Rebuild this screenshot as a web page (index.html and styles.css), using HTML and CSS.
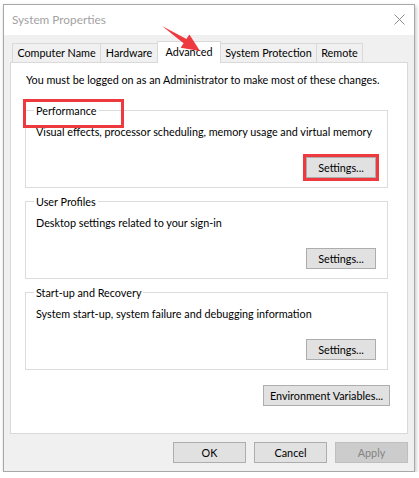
FILE: index.html
```html
<!DOCTYPE html>
<html lang="en">
<head>
  <meta charset="UTF-8">
  <title>System Properties</title>
  <link rel="stylesheet" href="styles.css">
</head>
<body>
  <div class="window">
    <!-- Title bar -->
    <div class="titlebar">
      <span class="title">System Properties</span>
      <svg class="close" width="11" height="11" viewBox="0 0 11 11">
        <path d="M0.5 0.5 L10.5 10.5 M10.5 0.5 L0.5 10.5" stroke="#8c8c8c" stroke-width="1" fill="none"/>
      </svg>
    </div>

    <div class="dialog">
      <!-- Tabs -->
      <div class="tabs">
        <div class="tab tab-cn">Computer Name</div>
        <div class="tab tab-hw">Hardware</div>
        <div class="tab tab-adv active">Advanced</div>
        <div class="tab tab-sp">System Protection</div>
        <div class="tab tab-rm">Remote</div>
      </div>

      <!-- Tab page -->
      <div class="panel">
        <p class="intro">You must be logged on as an Administrator to make most of these changes.</p>

        <fieldset class="group">
          <legend class="marked">Performance</legend>
          <p class="desc">Visual effects, processor scheduling, memory usage and virtual memory</p>
          <div class="group-actions">
            <button class="btn btn-settings highlighted">Settings...</button>
          </div>
        </fieldset>

        <fieldset class="group">
          <legend>User Profiles</legend>
          <p class="desc">Desktop settings related to your sign-in</p>
          <div class="group-actions">
            <button class="btn btn-settings">Settings...</button>
          </div>
        </fieldset>

        <fieldset class="group">
          <legend>Start-up and Recovery</legend>
          <p class="desc">System start-up, system failure and debugging information</p>
          <div class="group-actions">
            <button class="btn btn-settings">Settings...</button>
          </div>
        </fieldset>

        <div class="env-row">
          <button class="btn btn-env">Environment Variables...</button>
        </div>
      </div>

      <!-- Dialog buttons -->
      <div class="footer">
        <button class="btn btn-dlg">OK</button>
        <button class="btn btn-dlg">Cancel</button>
        <button class="btn btn-dlg" disabled>Apply</button>
      </div>
    </div>

    <!-- Annotation arrow -->
    <svg class="arrow" width="50" height="36" viewBox="0 0 50 36">
      <polygon points="4,5 28.4,18 31.4,13.4 42,30 22.6,26.8 25.6,22.2" fill="#ee3a3f"/>
    </svg>
  </div>
</body>
</html>
```
FILE: styles.css
```css
:root {
  --face: #f0f0f0;
  --line: #d9d9d9;
  --btn: #e1e1e1;
  --btn-border: #adadad;
  --red: #ee3a3f;
}

* {
  box-sizing: border-box;
}

body {
  margin: 0;
  background: #ffffff;
  font-family: 'Lato', sans-serif;
  font-size: 10.8px;
  color: #000;
}

p {
  margin: 0;
}

/* Window */
.window {
  position: relative;
  margin: 4px 0 0 3px;
  width: 412px;
  height: 468px;
  border: 1px solid #a8a8a8;
  background: var(--face);
  box-shadow: 1px 2px 4px rgba(0,0,0,0.25);
  display: flex;
  flex-direction: column;
}

.titlebar {
  height: 30px;
  background: #ffffff;
  display: flex;
  align-items: center;
  justify-content: space-between;
  padding: 0 9px 0 8px;
}

.title {
  font-size: 11.8px;
  color: #a2a2a2;
  line-height: 15px;
  margin-top: -1px;
}

.close {
  margin-top: -1px;
}

/* Tabs */
.dialog {
  flex: 1;
  padding: 6px 6px 0 6px;
  display: flex;
  flex-direction: column;
}

.tabs {
  display: flex;
  align-items: flex-end;
  padding-left: 2px;
}

.tab {
  height: 19px;
  border: 1px solid var(--line);
  border-bottom: none;
  margin-right: -1px;
  background: var(--face);
  line-height: 18px;
  text-align: center;
  white-space: nowrap;
}

.tab-cn { width: 89px; }
.tab-hw { width: 58px; }
.tab-adv { width: 64px; }
.tab-sp { width: 97px; }
.tab-rm { width: 47px; }

.tab.active {
  height: 22px;
  background: #ffffff;
  margin-bottom: -1px;
  position: relative;
  z-index: 1;
  line-height: 20px;
}

.panel {
  height: 372px;
  background: #ffffff;
  border: 1px solid var(--line);
  padding: 9px 19px 0 14px;
}

.intro {
  line-height: 15px;
  padding-left: 1px;
}

/* Group boxes */
.group {
  margin: 6px 0 0 0;
  padding: 0 11px 9px 8px;
  border: 1px solid #dcdcdc;
  min-width: 0;
}

.group:first-of-type {
  margin-top: 16px;
}

.group legend {
  padding: 0 2px;
  line-height: 15px;
  position: relative;
}

.marked::after {
  content: "";
  position: absolute;
  left: -11px;
  top: -4px;
  width: 95px;
  height: 23px;
  border: 3px solid var(--red);
}

.desc {
  margin-top: 6px;
  line-height: 15px;
  padding-left: 2px;
}

.group-actions {
  display: flex;
  justify-content: flex-end;
  margin-top: 18px;
}

/* Buttons */
.btn {
  height: 21px;
  background: var(--btn);
  border: 1px solid var(--btn-border);
  border-radius: 0;
  font-family: inherit;
  font-size: 10.8px;
  color: #000;
  padding: 0;
  line-height: 19px;
}

.btn-settings {
  width: 70px;
}

.btn.highlighted {
  outline: 3px solid var(--red);
  outline-offset: 0;
}

.env-row {
  display: flex;
  justify-content: flex-end;
  margin-top: 15px;
  margin-right: -2px;
}

.btn-env {
  width: 127px;
}

.footer {
  display: flex;
  justify-content: flex-end;
  gap: 8px;
  margin-top: 8px;
}

.btn-dlg {
  width: 73px;
}

.btn:disabled {
  background: #cccccc;
  border-color: #bfbfbf;
  color: #838383;
}

/* Annotation */
.arrow {
  position: absolute;
  left: 154px;
  top: 16px;
  z-index: 2;
}
```
